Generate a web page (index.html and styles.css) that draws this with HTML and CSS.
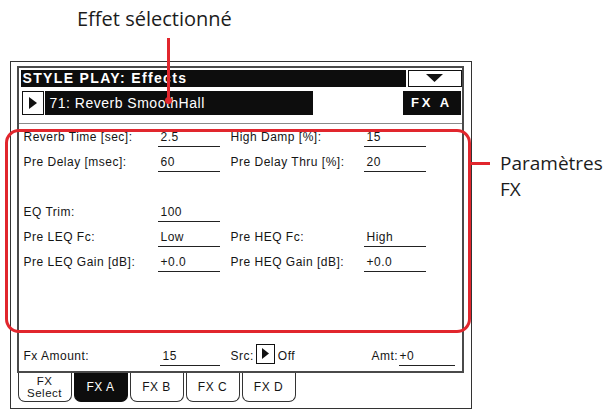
FILE: index.html
```html
<!DOCTYPE html>
<html lang="fr">
<head>
<meta charset="utf-8">
<title>Style Play Effects</title>
<link rel="stylesheet" href="styles.css">
</head>
<body>
<div class="page">
  <div class="caption-top">Effet sélectionné</div>

  <div class="lcd">
    <div class="panel">
      <div class="titlebar">
        <div class="title">STYLE PLAY: Effects</div>
        <div class="dropdown">
          <svg width="17" height="8" viewBox="0 0 17 8"><path d="M0 0H17L8.5 8Z" fill="#111"/></svg>
        </div>
      </div>

      <div class="selwrap">
        <div class="selrow">
          <div class="arrowbox">
            <svg width="8" height="12" viewBox="0 0 8 12"><path d="M0 0L8 6L0 12Z" fill="#111"/></svg>
          </div>
          <div class="fxname">71: Reverb SmoothHall</div>
          <div class="fxbadge">FX A</div>
        </div>
      </div>

      <div class="params">
        <span class="lbl">Reverb Time [sec]:</span><span class="val">2.5</span>
        <span class="lbl l2">High Damp [%]:</span><span class="val">15</span>

        <span class="lbl">Pre Delay [msec]:</span><span class="val">60</span>
        <span class="lbl l2">Pre Delay Thru [%]:</span><span class="val">20</span>

        <span class="blank"></span>

        <span class="lbl">EQ Trim:</span><span class="val">100</span>
        <span class="lbl l2"></span><span class="empty"></span>

        <span class="lbl">Pre LEQ Fc:</span><span class="val">Low</span>
        <span class="lbl l2">Pre HEQ Fc:</span><span class="val">High</span>

        <span class="lbl">Pre LEQ Gain [dB]:</span><span class="val">+0.0</span>
        <span class="lbl l2">Pre HEQ Gain [dB]:</span><span class="val">+0.0</span>
      </div>

      <div class="amount">
        <span class="lbl amt-lbl">Fx Amount:</span>
        <span class="val amt-val">15</span>
        <div class="src">
          <span class="src-lbl">Src:</span>
          <span class="arrowbox small">
            <svg width="7" height="11" viewBox="0 0 7 11"><path d="M0 0L7 5.5L0 11Z" fill="#111"/></svg>
          </span>
          <span class="src-val">Off</span>
        </div>
        <span class="amt-k">Amt:</span>
        <span class="val amt-v">+0</span>
      </div>
    </div>

    <div class="tabs">
      <div class="tab two"><span>FX</span><span>Select</span></div>
      <div class="tab active">FX A</div>
      <div class="tab">FX B</div>
      <div class="tab">FX C</div>
      <div class="tab">FX D</div>
    </div>
  </div>

  <div class="pointer"></div>
  <div class="highlight"></div>
  <div class="callout">
    <div class="tick"></div>
    <div class="callout-text">
      <div class="callout-line">Paramètres</div>
      <div class="callout-line">FX</div>
    </div>
  </div>
</div>
</body>
</html>
```

FILE: styles.css
```css
* { box-sizing: border-box; }

html, body {
  margin: 0;
  padding: 0;
  background: #ffffff;
}

.page {
  position: relative;
  width: 612px;
  height: 414px;
  overflow: hidden;
  font-family: "Liberation Sans", Arial, sans-serif;
  color: #151515;
}

.caption-top {
  height: 61px;
  padding: 5px 0 0 77px;
  font-family: "Open Sans", "Noto Sans", sans-serif;
  font-size: 20px;
  line-height: 27px;
  color: #1c1c1c;
}

/* ---------- LCD frame ---------- */
.lcd {
  margin-left: 10px;
  width: 462px;
  height: 348px;
  border: 1.5px solid #333;
  padding: 3.5px 7.5px 5.5px 5.5px;
  display: flex;
  flex-direction: column;
}

.panel {
  height: 307px;
  border: 2px solid #4a4a4a;
  display: flex;
  flex-direction: column;
}

.titlebar {
  margin-top: 2px;
  height: 17px;
  display: flex;
  gap: 2px;
  padding-left: 2px;
}

.title {
  flex: 1;
  background: #0d0d0d;
  color: #fff;
  font-weight: bold;
  font-size: 14px;
  line-height: 17px;
  letter-spacing: 1.35px;
  padding-left: 2px;
}

.dropdown {
  width: 54px;
  height: 17px;
  border: 1.5px solid #111;
  background: #fff;
  display: flex;
  align-items: center;
  justify-content: center;
}

.selwrap {
  margin-top: 4px;
  padding-bottom: 8px;
  border-bottom: 1px solid #8a8a8a;
}

.selrow {
  height: 24px;
  display: flex;
  align-items: stretch;
  padding-left: 3px;
}

.arrowbox {
  width: 22px;
  border: 1.5px solid #111;
  background: #fff;
  display: flex;
  align-items: center;
  justify-content: center;
}

.fxname {
  width: 268px;
  margin-left: 1px;
  background: #0d0d0d;
  color: #fff;
  font-size: 14px;
  line-height: 24px;
  letter-spacing: 0.5px;
  padding-left: 5px;
}

.fxbadge {
  margin-left: auto;
  margin-right: 1px;
  width: 58px;
  background: #0d0d0d;
  color: #fff;
  font-weight: bold;
  font-size: 13px;
  line-height: 24px;
  letter-spacing: 3px;
  text-align: center;
}

/* ---------- parameters ---------- */
.params {
  margin-top: 4px;
  padding-left: 5px;
  display: grid;
  grid-template-columns: 134px 62px 144px 62px;
  grid-auto-rows: 25px;
  align-items: start;
}

.lbl {
  font-size: 12px;
  line-height: 18px;
  letter-spacing: 0.5px;
  white-space: nowrap;
}

.l2 { padding-left: 11px; }

.val {
  display: block;
  height: 19.5px;
  border-bottom: 1.5px solid #222;
  font-size: 12px;
  line-height: 18px;
  letter-spacing: 0.5px;
  padding-left: 3px;
}

.blank { grid-column: 1 / -1; }

.amount {
  margin-top: auto;
  height: 24px;
  padding-left: 5px;
  display: flex;
  align-items: flex-start;
}

.amt-lbl { width: 136px; }
.amt-val { width: 60px; }

.src {
  width: 152px;
  padding-left: 11px;
  display: flex;
  align-items: flex-start;
  font-size: 12px;
  line-height: 18px;
  letter-spacing: 0.5px;
  margin-top: -3px;
}

.src-lbl { margin-top: 3px; margin-right: 2px; }
.arrowbox.small { width: 19px; height: 20px; }
.src-val { margin-left: 3px; margin-top: 3px; }

.amt-k {
  width: 27px;
  font-size: 12px;
  line-height: 18px;
  letter-spacing: 0.5px;
}

.amt-v { width: 56px; padding-left: 1px; }

/* ---------- tabs ---------- */
.tabs {
  display: flex;
  gap: 2px;
  padding-left: 1px;
  height: 29px;
}

.tab {
  width: 54px;
  height: 29px;
  border: 1.5px solid #333;
  border-top: none;
  border-radius: 0 0 7px 7px;
  display: flex;
  align-items: center;
  justify-content: center;
  font-size: 12px;
  letter-spacing: 0.5px;
  color: #151515;
}

.tab.two {
  flex-direction: column;
  font-size: 11.5px;
  line-height: 12px;
}

.tab.active {
  background: #0d0d0d;
  color: #fff;
  border-color: #0d0d0d;
}

/* ---------- annotations ---------- */
.pointer {
  position: absolute;
  left: 166.5px;
  top: 38px;
  width: 3px;
  height: 62px;
  background: #e1262d;
}

.pointer::after {
  content: "";
  position: absolute;
  left: -2px;
  bottom: -3.5px;
  width: 7px;
  height: 7px;
  border-radius: 50%;
  background: #e1262d;
}

.highlight {
  position: absolute;
  left: 5px;
  top: 129px;
  width: 466px;
  height: 204px;
  border: 3px solid #e1262d;
  border-radius: 14px;
}

.callout {
  position: absolute;
  left: 470px;
  top: 150px;
  display: flex;
  align-items: flex-start;
}

.tick {
  width: 20px;
  height: 3px;
  margin-top: 11.5px;
  margin-right: 10px;
  background: #e1262d;
}

.callout-text {
  font-family: "Open Sans", "Noto Sans", sans-serif;
  font-size: 19px;
  color: #1c1c1c;
}

.callout-line {
  height: 26px;
  line-height: 26px;
}
```
